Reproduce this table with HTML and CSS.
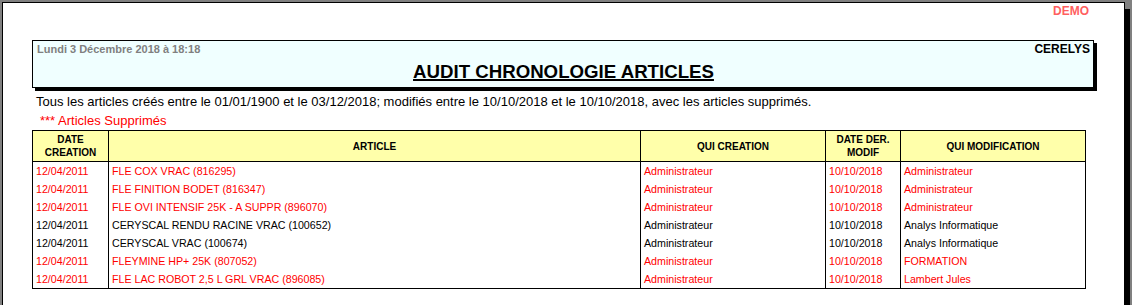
FILE: index.html
```html
<!DOCTYPE html>
<html lang="fr">
<head>
<meta charset="utf-8">
<title>Audit chronologie articles</title>
<link rel="stylesheet" href="styles.css">
</head>
<body>
<div class="page">
  <div class="demo">DEMO</div>
  <div class="report-head">
    <div class="head-top">
      <span class="date">Lundi 3 Décembre 2018 à 18:18</span>
      <span class="company">CERELYS</span>
    </div>
    <div class="title">AUDIT CHRONOLOGIE ARTICLES</div>
  </div>
  <p class="criteria">Tous les articles créés entre le 01/01/1900 et le 03/12/2018; modifiés entre le 10/10/2018 et le 10/10/2018, avec les articles supprimés.</p>
  <p class="deleted-note">*** Articles Supprimés</p>
  <table class="grid">
    <colgroup>
      <col class="c-date">
      <col class="c-article">
      <col class="c-qui">
      <col class="c-mod">
      <col class="c-quimod">
    </colgroup>
    <thead>
      <tr>
        <th>DATE<br>CREATION</th>
        <th>ARTICLE</th>
        <th>QUI CREATION</th>
        <th>DATE DER.<br>MODIF</th>
        <th>QUI MODIFICATION</th>
      </tr>
    </thead>
    <tbody>
      <tr class="del"><td>12/04/2011</td><td>FLE COX VRAC (816295)</td><td>Administrateur</td><td>10/10/2018</td><td>Administrateur</td></tr>
      <tr class="del"><td>12/04/2011</td><td>FLE FINITION BODET (816347)</td><td>Administrateur</td><td>10/10/2018</td><td>Administrateur</td></tr>
      <tr class="del"><td>12/04/2011</td><td>FLE OVI INTENSIF 25K - A SUPPR (896070)</td><td>Administrateur</td><td>10/10/2018</td><td>Administrateur</td></tr>
      <tr><td>12/04/2011</td><td>CERYSCAL RENDU RACINE VRAC (100652)</td><td>Administrateur</td><td>10/10/2018</td><td>Analys Informatique</td></tr>
      <tr><td>12/04/2011</td><td>CERYSCAL VRAC (100674)</td><td>Administrateur</td><td>10/10/2018</td><td>Analys Informatique</td></tr>
      <tr class="del"><td>12/04/2011</td><td>FLEYMINE HP+ 25K (807052)</td><td>Administrateur</td><td>10/10/2018</td><td>FORMATION</td></tr>
      <tr class="del last"><td>12/04/2011</td><td>FLE LAC ROBOT 2,5 L GRL VRAC (896085)</td><td>Administrateur</td><td>10/10/2018</td><td>Lambert Jules</td></tr>
    </tbody>
  </table>
</div>
</body>
</html>
```
FILE: styles.css
```css
html, body {
  margin: 0;
  padding: 0;
  background: #808080;
  overflow: hidden;
}
body {
  font-family: "Liberation Sans", Arial, sans-serif;
  color: #000;
}
.page {
  box-sizing: border-box;
  margin: 2px 0 0 2px;
  width: 1123px;
  min-height: 340px;
  border: 1px solid #000;
  background: #fff;
  box-shadow: 5px 7px 0 #000;
  padding: 1px 0 0 29px;
}
.demo {
  width: 1057px;
  text-align: right;
  font-size: 12px;
  font-weight: bold;
  line-height: 14px;
  color: #ff5f5f;
}
.report-head {
  box-sizing: border-box;
  margin-top: 22px;
  width: 1062px;
  height: 48px;
  border: 1px solid #000;
  background: #f0ffff;
  box-shadow: 3px 3px 0 #000;
  padding: 2px 3px 0 4px;
}
.head-top {
  display: flex;
  justify-content: space-between;
  align-items: flex-start;
}
.date {
  font-size: 11px;
  font-weight: bold;
  line-height: 13px;
  color: #808080;
}
.company {
  font-size: 12px;
  font-weight: bold;
  line-height: 13px;
  color: #000;
}
.title {
  margin-top: 5px;
  text-align: center;
  font-size: 18.67px;
  font-weight: bold;
  line-height: 22px;
  text-decoration: underline;
  text-decoration-thickness: 2px;
  text-underline-offset: 1px;
}
.criteria {
  margin: 6px 0 0;
  padding-left: 4px;
  font-size: 13px;
  line-height: 16px;
}
.deleted-note {
  margin: 3px 0 0;
  padding-left: 8px;
  font-size: 13px;
  line-height: 16px;
  color: #ff0000;
}
.grid {
  margin-top: 1px;
  table-layout: fixed;
  border-collapse: separate;
  border-spacing: 0;
  width: 1054px;
  border-left: 1px solid #000;
  border-top: 1px solid #000;
}
.c-date { width: 76px; }
.c-article { width: 532px; }
.c-qui { width: 185px; }
.c-mod { width: 75px; }
.c-quimod { width: 185px; }
.grid th {
  box-sizing: border-box;
  height: 31px;
  padding: 0;
  background: #ffffaa;
  border-right: 1px solid #000;
  border-bottom: 1px solid #000;
  font-size: 10px;
  font-weight: bold;
  line-height: 13px;
  text-align: center;
  vertical-align: middle;
}
.grid td {
  box-sizing: border-box;
  height: 18px;
  padding: 0 2px 0 3px;
  border-right: 1px solid #000;
  font-size: 10.67px;
  line-height: 18px;
  white-space: nowrap;
  overflow: hidden;
}
.grid tr.del td {
  color: #ff0000;
}
.grid tr.last td {
  height: 19px;
  border-bottom: 1px solid #000;
}
```
